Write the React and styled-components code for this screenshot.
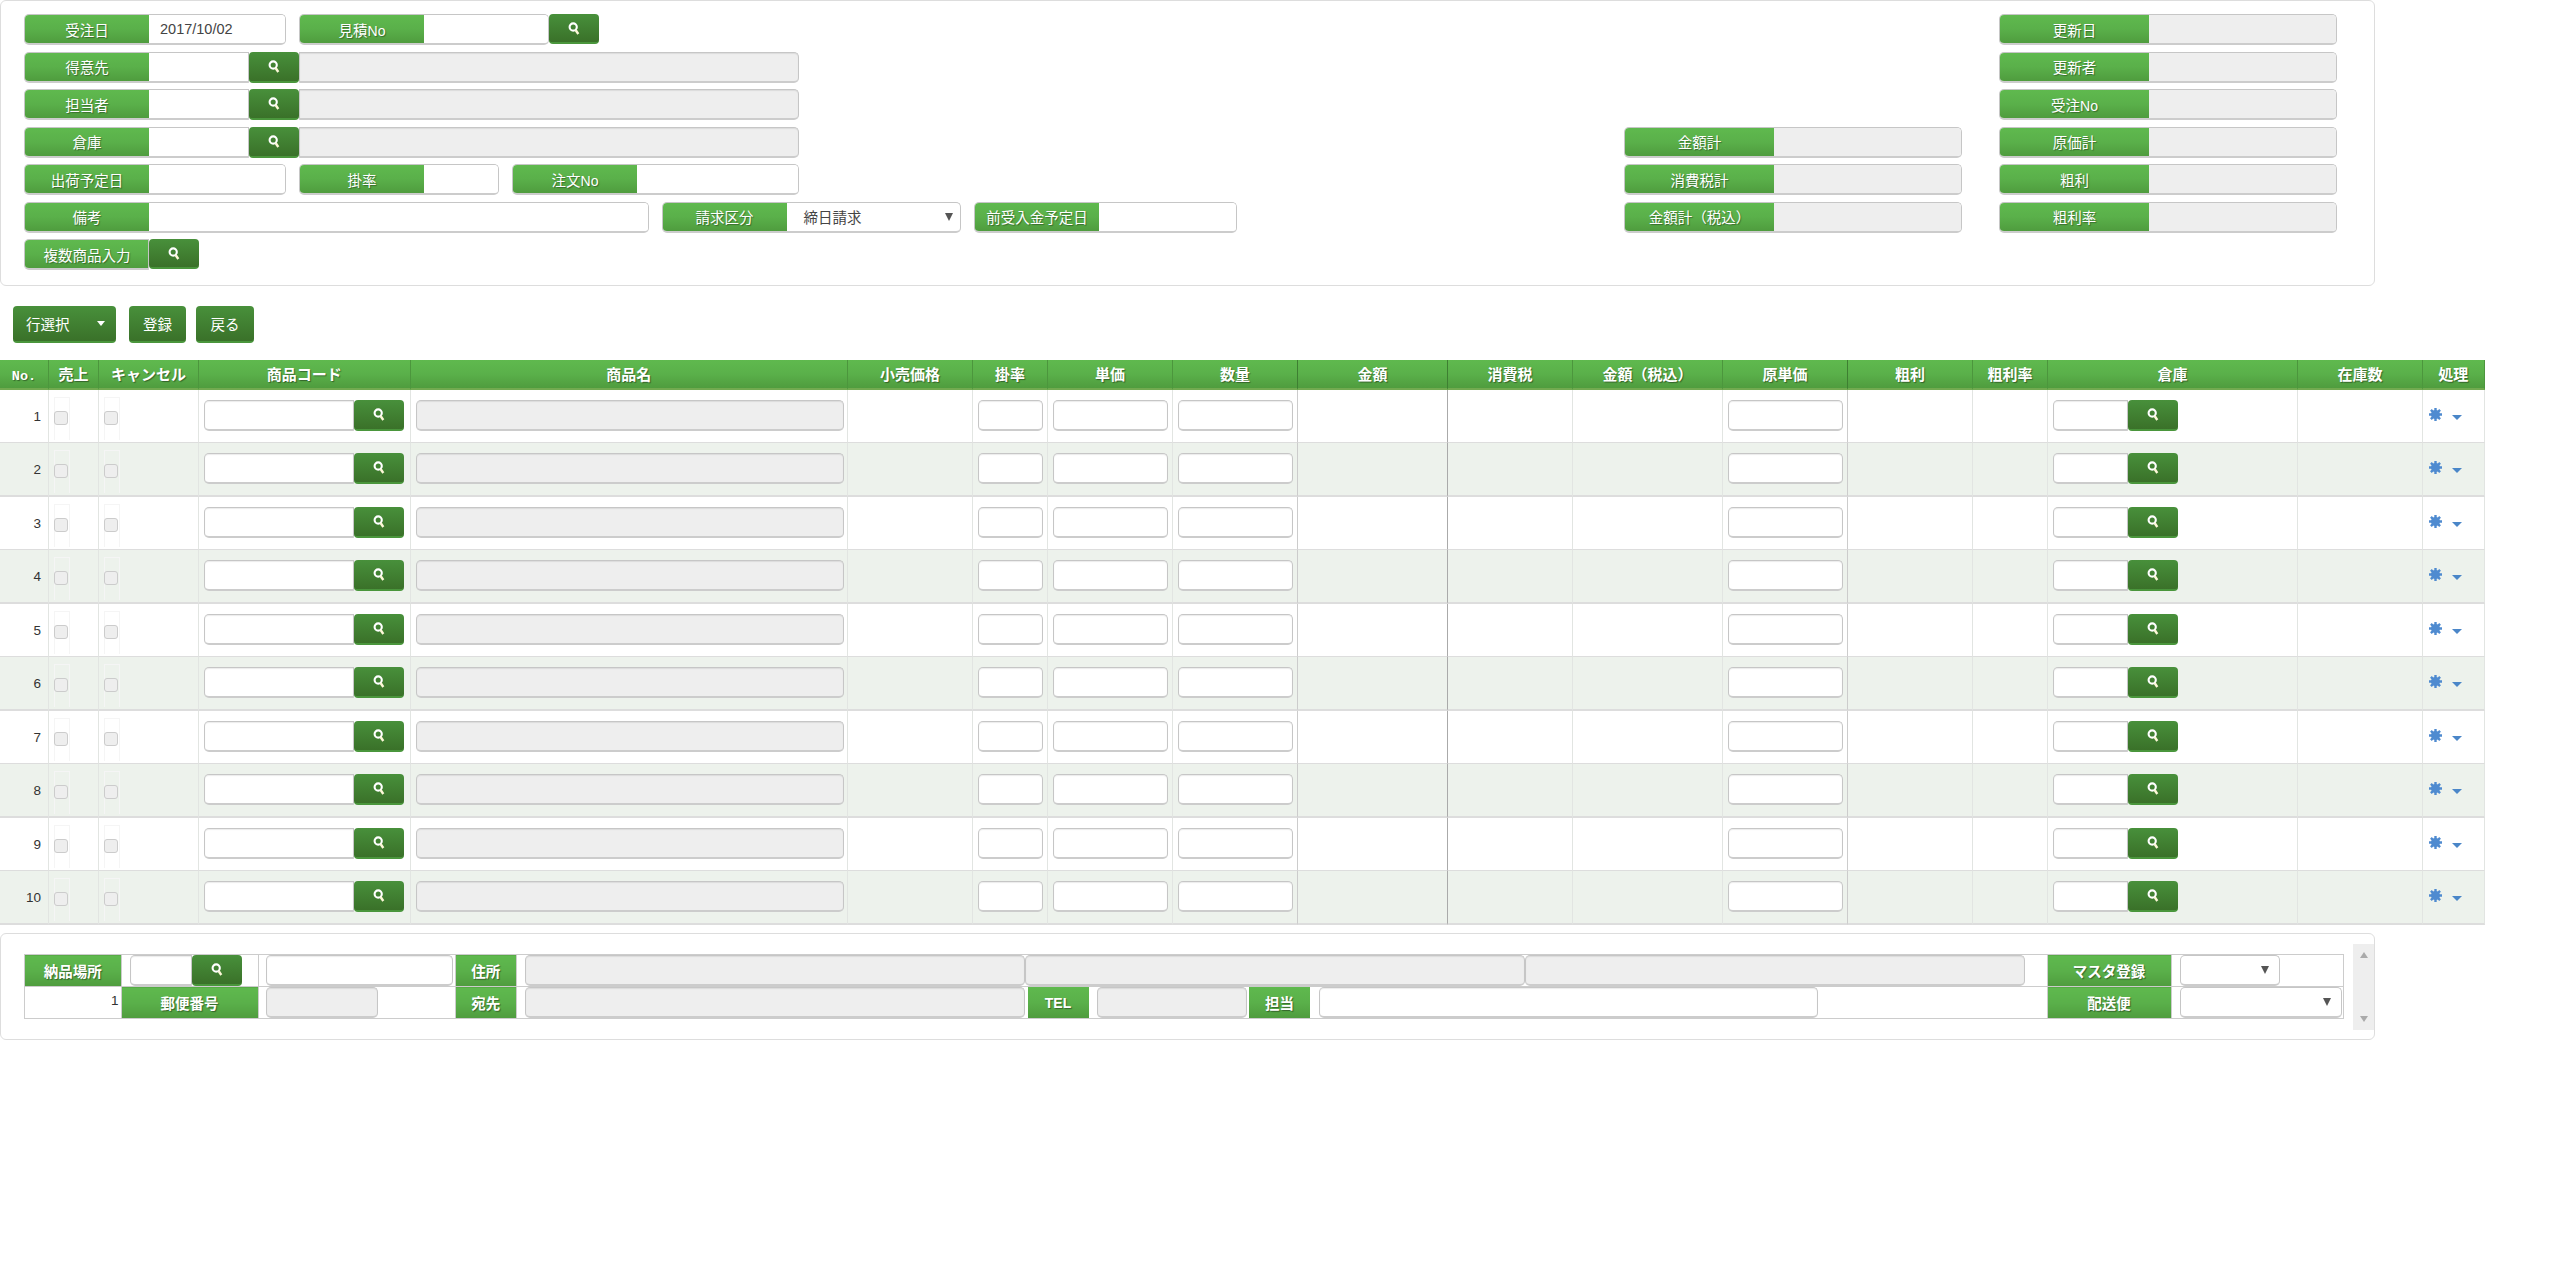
import React from "react";
import styled, { createGlobalStyle } from "styled-components";

const GlobalStyle = createGlobalStyle`
  * { box-sizing: border-box; }
  body {
    margin: 0;
    background: #fff;
    color: #333;
    font-family: "Noto Sans CJK JP", "Noto Sans", sans-serif;
    font-size: 14.5px;
  }
`;

const green = "linear-gradient(to bottom, #5fb94e 0%, #5ab04a 50%, #4f9c3e 100%)";
const darkGreen = "linear-gradient(to bottom, #48903b 0%, #3a7129 100%)";

const Page = styled.div`
  width: 2560px;
`;

const Panel = styled.div`
  width: 2375px;
  height: 286px;
  border: 1px solid #ddd;
  border-radius: 6px;
  padding: 13px 0 0 23px;
  display: flex;
`;

const Col = styled.div`
  width: ${(p) => p.$w}px;
  margin-top: ${(p) => p.$top || 0}px;
  display: flex;
  flex-direction: column;
  gap: 6.5px;
`;

const Row = styled.div`
  display: flex;
  height: 31px;
  gap: ${(p) => (p.$gap === undefined ? 14 : p.$gap)}px;
`;

const Group = styled.div`
  display: flex;
`;

const Field = styled.div`
  display: flex;
  width: ${(p) => p.$w}px;
  height: 31px;
  border: 1px solid #c6c6c6;
  border-bottom: 2px solid #ccc;
  border-radius: ${(p) => (p.$open ? "5px 0 0 5px" : "5px")};
  overflow: hidden;
  background: #fff;
`;

const Label = styled.div`
  flex: none;
  width: ${(p) => p.$w || 124}px;
  display: flex;
  align-items: center;
  justify-content: center;
  background: ${green};
  color: #fff;
  white-space: nowrap;
  text-shadow: 1px 1px 1px rgba(0, 0, 0, 0.35);
`;

const Latin = styled.span`
  font-family: "Liberation Sans", sans-serif;
  font-size: 14px;
`;

const Inner = styled.input`
  flex: 1;
  min-width: 0;
  border: 0;
  outline: 0;
  padding: 0 0 1px 11px;
  background: ${(p) => (p.readOnly ? "#eee" : "#fff")};
  color: #444;
  font-family: "Liberation Sans", sans-serif;
  font-size: 14.5px;
`;

const Box = styled.input`
  display: block;
  flex: none;
  width: ${(p) => (p.$w ? `${p.$w}px` : "100%")};
  height: 31px;
  margin-left: ${(p) => p.$ml || 0}px;
  border: 1px solid #c6c6c6;
  border-bottom: 2px solid #ccc;
  border-radius: ${(p) => (p.$side === "left" ? "5px 0 0 5px" : p.$side === "right" ? "0 5px 5px 0" : "5px")};
  outline: 0;
  padding: 0 6px;
  background: ${(p) => (p.readOnly ? "#eee" : "#fff")};
  box-shadow: inset 0 1px 1px rgba(0, 0, 0, 0.08);
`;

const SelectInner = styled.div`
  flex: 1;
  display: flex;
  align-items: center;
  justify-content: space-between;
  padding: 0 7px 0 17px;
  color: #444;
`;

const SelectBox = styled.div`
  display: flex;
  align-items: center;
  justify-content: flex-end;
  width: ${(p) => p.$w}px;
  height: 31px;
  border: 1px solid #c6c6c6;
  border-bottom: 2px solid #ccc;
  border-radius: 5px;
  padding-right: 10px;
  background: #fff;
`;

const Arrow = styled.span`
  width: 0;
  height: 0;
  border-left: 4px solid transparent;
  border-right: 4px solid transparent;
  border-top: 8px solid #555;
`;

const SearchBtn = styled.button`
  flex: none;
  display: flex;
  justify-content: center;
  width: ${(p) => p.$w || 50}px;
  height: ${(p) => p.$h || 31}px;
  padding: 8px 0 0;
  border: 0;
  border-bottom: 2px solid #4a963c;
  border-radius: 4px;
  background: ${darkGreen};
`;

const SearchIcon = () => (
  <svg width="12" height="13" viewBox="0 0 12 13">
    <circle cx="5.2" cy="5" r="3.6" fill="none" stroke="#fff" strokeWidth="2.1" />
    <path d="M7.6 8l2.7 4" stroke="#fdf8d8" strokeWidth="2.4" fill="none" />
  </svg>
);

const Search = (props) => (
  <SearchBtn type="button" {...props}>
    <SearchIcon />
  </SearchBtn>
);

const Toolbar = styled.div`
  display: flex;
  height: 37px;
  margin: 20px 0 17px 13px;
`;

const ActionBtn = styled.button`
  display: flex;
  align-items: center;
  justify-content: ${(p) => (p.$menu ? "space-between" : "center")};
  width: ${(p) => p.$w}px;
  margin-right: ${(p) => p.$mr || 0}px;
  padding: ${(p) => (p.$menu ? "0 11px 0 13px" : "0")};
  border: 0;
  border-bottom: 2px solid #4a963c;
  border-radius: 4px;
  background: ${darkGreen};
  color: #fff;
  font-family: inherit;
  font-size: 14.5px;
`;

const WhiteCaret = styled.span`
  width: 0;
  height: 0;
  border-left: 4.5px solid transparent;
  border-right: 4.5px solid transparent;
  border-top: 5px solid #fff;
`;

const Grid = styled.table`
  width: 2484px;
  table-layout: fixed;
  border-collapse: separate;
  border-spacing: 0;
`;

const ColWidth = styled.col`
  width: ${(p) => p.$w}px;
`;

const Head = styled.th`
  height: 30px;
  padding: 0 0 2px;
  background: ${green};
  border-bottom: 2px solid #72aa50;
  border-right: 1px solid ${(p) => (p.$strong ? "#3e7f32" : "#4c963d")};
  color: #fff;
  font-size: 15px;
  font-weight: 700;
  text-align: center;
  white-space: nowrap;
  text-shadow: 1px 1px 1px rgba(0, 0, 0, 0.4);
`;

const HeadLatin = styled.span`
  font-family: "Liberation Mono", monospace;
  font-size: 13.5px;
`;

const Cell = styled.td`
  height: ${(p) => (p.$even ? 54 : 53)}px;
  padding: 10px ${(p) => (p.$right === undefined ? 4.5 : p.$right)}px 0 ${(p) => (p.$left === undefined ? 5 : p.$left)}px;
  vertical-align: top;
  background: ${(p) => (p.$even ? "#edf2ec" : "#fff")};
  border-bottom: ${(p) => (p.$even ? 2 : 1)}px solid #ddd;
  border-right: 1px solid ${(p) => (p.$strong === 2 ? "#aaa" : p.$strong === 1 ? "#ccc" : "#e2e5e2")};
`;

const RowNo = styled.div`
  padding: 9px 2px 0 0;
  text-align: right;
  color: #333;
  font-family: "Liberation Sans", sans-serif;
  font-size: 13.5px;
  line-height: 16px;
`;

const CheckWrap = styled.div`
  width: 16px;
  height: 43px;
  margin-top: -3px;
  padding-top: 13px;
  border: 1px solid #f5f5f5;
  border-bottom: 0;
`;

const Check = styled.input`
  display: block;
  appearance: none;
  width: 14px;
  height: 14px;
  margin: 0 0 0 -1px;
  border: 1px solid #ccc;
  border-radius: 3px;
  background: #eee;
`;

const MenuWrap = styled.div`
  display: flex;
  gap: 10px;
  padding-top: 8px;
`;

const Caret = styled.svg`
  margin-top: 7px;
`;

const Footer = styled.div`
  display: flex;
  width: 2375px;
  height: 107px;
  margin-top: 8px;
  padding: 10px 0 9px 23px;
  border: 1px solid #ddd;
  border-radius: 6px;
`;

const FooterBody = styled.div`
  width: 2329px;
  padding-top: 10px;
`;

const FooterTable = styled.table`
  width: 2319px;
  table-layout: fixed;
  border-collapse: collapse;
`;

const FCell = styled.td`
  height: 32px;
  padding: 0 0 0 ${(p) => p.$left || 0}px;
  border: 1px solid #ccc;
  vertical-align: top;
  background: ${(p) => (p.$label ? green : "#fff")};
`;

const FLabel = styled.div`
  display: flex;
  align-items: center;
  justify-content: center;
  width: ${(p) => (p.$w ? `${p.$w}px` : "auto")};
  flex: none;
  height: 31px;
  margin-left: ${(p) => p.$ml || 0}px;
  background: ${(p) => (p.$bg ? green : "none")};
  color: #fff;
  font-weight: 700;
  text-shadow: 1px 1px 1px rgba(0, 0, 0, 0.4);
`;

const FNo = styled.div`
  padding: 6px 2px 0 0;
  text-align: right;
  font-family: "Liberation Sans", sans-serif;
  font-size: 13.5px;
  line-height: 16px;
`;

const FlexLine = styled.div`
  display: flex;
`;

const ScrollBar = styled.div`
  flex: none;
  width: 21px;
  display: flex;
  flex-direction: column;
  align-items: center;
  justify-content: space-between;
  padding: 8px 0;
  background: #eee;
`;

const ScrollArrow = styled.span`
  width: 0;
  height: 0;
  border-left: 4.5px solid transparent;
  border-right: 4.5px solid transparent;
  ${(p) => (p.$up ? "border-bottom: 6px solid #aaa;" : "border-top: 6px solid #aaa;")}
`;

const columns = [
  { key: "no", w: 49, label: <HeadLatin>No.</HeadLatin> },
  { key: "check", w: 50, label: "売上" },
  { key: "check", w: 100, label: "キャンセル" },
  { key: "code", w: 211.5, label: "商品コード" },
  { key: "name", w: 437.5, label: "商品名" },
  { key: "text", w: 125, label: "小売価格" },
  { key: "input", w: 75, label: "掛率" },
  { key: "input", w: 125, label: "単価" },
  { key: "input", w: 125, label: "数量", strong: 1 },
  { key: "text", w: 150, label: "金額", strong: 2 },
  { key: "text", w: 125, label: "消費税" },
  { key: "text", w: 150, label: "金額（税込）" },
  { key: "input", w: 125, label: "原単価", strong: 1 },
  { key: "text", w: 125, label: "粗利" },
  { key: "text", w: 75, label: "粗利率" },
  { key: "stock", w: 250, label: "倉庫" },
  { key: "text", w: 125, label: "在庫数" },
  { key: "menu", w: 61.5, label: "処理" },
];

const rows = [1, 2, 3, 4, 5, 6, 7, 8, 9, 10];

const renderCell = (col, no) => {
  switch (col.key) {
    case "no":
      return <RowNo>{no}</RowNo>;
    case "check":
      return (
        <CheckWrap>
          <Check type="checkbox" disabled />
        </CheckWrap>
      );
    case "code":
      return (
        <FlexLine>
          <Box $w={150} $side="left" />
          <Search />
        </FlexLine>
      );
    case "name":
      return <Box readOnly />;
    case "input":
      return <Box />;
    case "stock":
      return (
        <FlexLine>
          <Box $w={75} $side="left" />
          <Search />
        </FlexLine>
      );
    case "menu":
      return (
        <MenuWrap>
          <svg width="13" height="13" viewBox="0 0 13 13">
            <g stroke="#4f8bd0" strokeWidth="2.4">
              <path d="M6.5 0v13M0 6.5h13M1.9 1.9l9.2 9.2M11.1 1.9l-9.2 9.2" />
            </g>
            <circle cx="6.5" cy="6.5" r="4.5" fill="#4f8bd0" />
          </svg>
          <Caret width="10" height="5" viewBox="0 0 10 5">
            <path d="M0 0h10L5 5z" fill="#4a86c8" />
          </Caret>
        </MenuWrap>
      );
    default:
      return null;
  }
};

const cellPad = (col) => {
  if (col.key === "no") return { $left: 0, $right: 5 };
  if (col.key === "menu") return { $left: 6, $right: 0 };
  if (col.key === "check") return { $left: 5, $right: 0 };
  if (col.key === "stock") return { $left: 5, $right: 0 };
  if (col.key === "name") return { $left: 5.5, $right: 3.5 };
  return {};
};

export default function App() {
  return (
    <Page>
      <GlobalStyle />
      <Panel>
        <Col $w={1600}>
          <Row $gap={13}>
            <Field $w={262}>
              <Label>受注日</Label>
              <Inner defaultValue="2017/10/02" />
            </Field>
            <Group>
              <Field $w={250}>
                <Label><span>見積<Latin>No</Latin></span></Label>
                <Inner />
              </Field>
              <Search $h={30} />
            </Group>
          </Row>
          <Row>
            <Group>
              <Field $w={225} $open>
                <Label>得意先</Label>
                <Inner />
              </Field>
              <Search />
              <Box $w={500} $side="right" readOnly />
            </Group>
          </Row>
          <Row>
            <Group>
              <Field $w={225} $open>
                <Label>担当者</Label>
                <Inner />
              </Field>
              <Search />
              <Box $w={500} $side="right" readOnly />
            </Group>
          </Row>
          <Row>
            <Group>
              <Field $w={225} $open>
                <Label>倉庫</Label>
                <Inner />
              </Field>
              <Search />
              <Box $w={500} $side="right" readOnly />
            </Group>
          </Row>
          <Row $gap={13}>
            <Field $w={262}>
              <Label>出荷予定日</Label>
              <Inner />
            </Field>
            <Field $w={200}>
              <Label>掛率</Label>
              <Inner />
            </Field>
            <Field $w={287}>
              <Label><span>注文<Latin>No</Latin></span></Label>
              <Inner />
            </Field>
          </Row>
          <Row $gap={13}>
            <Field $w={624.5}>
              <Label>備考</Label>
              <Inner />
            </Field>
            <Field $w={299.5}>
              <Label>請求区分</Label>
              <SelectInner>
                <span>締日請求</span>
                <Arrow />
              </SelectInner>
            </Field>
            <Field $w={262.5}>
              <Label>前受入金予定日</Label>
              <Inner />
            </Field>
          </Row>
          <Row>
            <Group>
              <Field $w={125} $open>
                <Label>複数商品入力</Label>
              </Field>
              <Search $h={30} />
            </Group>
          </Row>
        </Col>
        <Col $w={375} $top={112.5}>
          {["金額計", "消費税計", "金額計（税込）"].map((t) => (
            <Field $w={338} key={t}>
              <Label $w={149}>{t}</Label>
              <Inner readOnly />
            </Field>
          ))}
        </Col>
        <Col $w={338}>
          {[
            "更新日",
            "更新者",
            <span key="no">受注<Latin>No</Latin></span>,
            "原価計",
            "粗利",
            "粗利率",
          ].map((t, i) => (
            <Field $w={338} key={i}>
              <Label $w={149}>{t}</Label>
              <Inner readOnly />
            </Field>
          ))}
        </Col>
      </Panel>

      <Toolbar>
        <ActionBtn $w={103} $mr={13} $menu>
          行選択
          <WhiteCaret />
        </ActionBtn>
        <ActionBtn $w={57} $mr={10}>登録</ActionBtn>
        <ActionBtn $w={58}>戻る</ActionBtn>
      </Toolbar>

      <Grid>
        <colgroup>
          {columns.map((c, i) => (
            <ColWidth key={i} $w={c.w} />
          ))}
        </colgroup>
        <thead>
          <tr>
            {columns.map((c, i) => (
              <Head key={i} $strong={c.strong}>{c.label}</Head>
            ))}
          </tr>
        </thead>
        <tbody>
          {rows.map((no) => (
            <tr key={no}>
              {columns.map((c, i) => (
                <Cell key={i} $even={no % 2 === 0} $strong={c.strong} {...cellPad(c)}>
                  {renderCell(c, no)}
                </Cell>
              ))}
            </tr>
          ))}
        </tbody>
      </Grid>

      <Footer>
        <FooterBody>
          <FooterTable>
            <colgroup>
              <ColWidth $w={96.5} />
              <ColWidth $w={137} />
              <ColWidth $w={197} />
              <ColWidth $w={61.5} />
              <ColWidth $w={1530.5} />
              <ColWidth $w={124} />
              <ColWidth $w={172.5} />
            </colgroup>
            <tbody>
              <tr>
                <FCell $label><FLabel>納品場所</FLabel></FCell>
                <FCell $left={8}>
                  <FlexLine>
                    <Box $w={62} $side="left" />
                    <Search />
                  </FlexLine>
                </FCell>
                <FCell $left={7}><Box $w={187} /></FCell>
                <FCell $label><FLabel>住所</FLabel></FCell>
                <FCell $left={7.5}>
                  <FlexLine>
                    <Box $w={500} readOnly />
                    <Box $w={500} readOnly />
                    <Box $w={500} readOnly />
                  </FlexLine>
                </FCell>
                <FCell $label><FLabel>マスタ登録</FLabel></FCell>
                <FCell $left={8}>
                  <SelectBox $w={100}><Arrow /></SelectBox>
                </FCell>
              </tr>
              <tr>
                <FCell><FNo>1</FNo></FCell>
                <FCell $label><FLabel>郵便番号</FLabel></FCell>
                <FCell $left={7}><Box $w={112} readOnly /></FCell>
                <FCell $label><FLabel>宛先</FLabel></FCell>
                <FCell $left={7.5}>
                  <FlexLine>
                    <Box $w={500} readOnly />
                    <FLabel $w={61} $ml={3} $bg><Latin>TEL</Latin></FLabel>
                    <Box $w={150} $ml={8} readOnly />
                    <FLabel $w={61} $ml={2.5} $bg>担当</FLabel>
                    <Box $w={499} $ml={9} />
                  </FlexLine>
                </FCell>
                <FCell $label><FLabel>配送便</FLabel></FCell>
                <FCell $left={8}>
                  <SelectBox $w={162}><Arrow /></SelectBox>
                </FCell>
              </tr>
            </tbody>
          </FooterTable>
        </FooterBody>
        <ScrollBar>
          <ScrollArrow $up />
          <ScrollArrow />
        </ScrollBar>
      </Footer>
    </Page>
  );
}
